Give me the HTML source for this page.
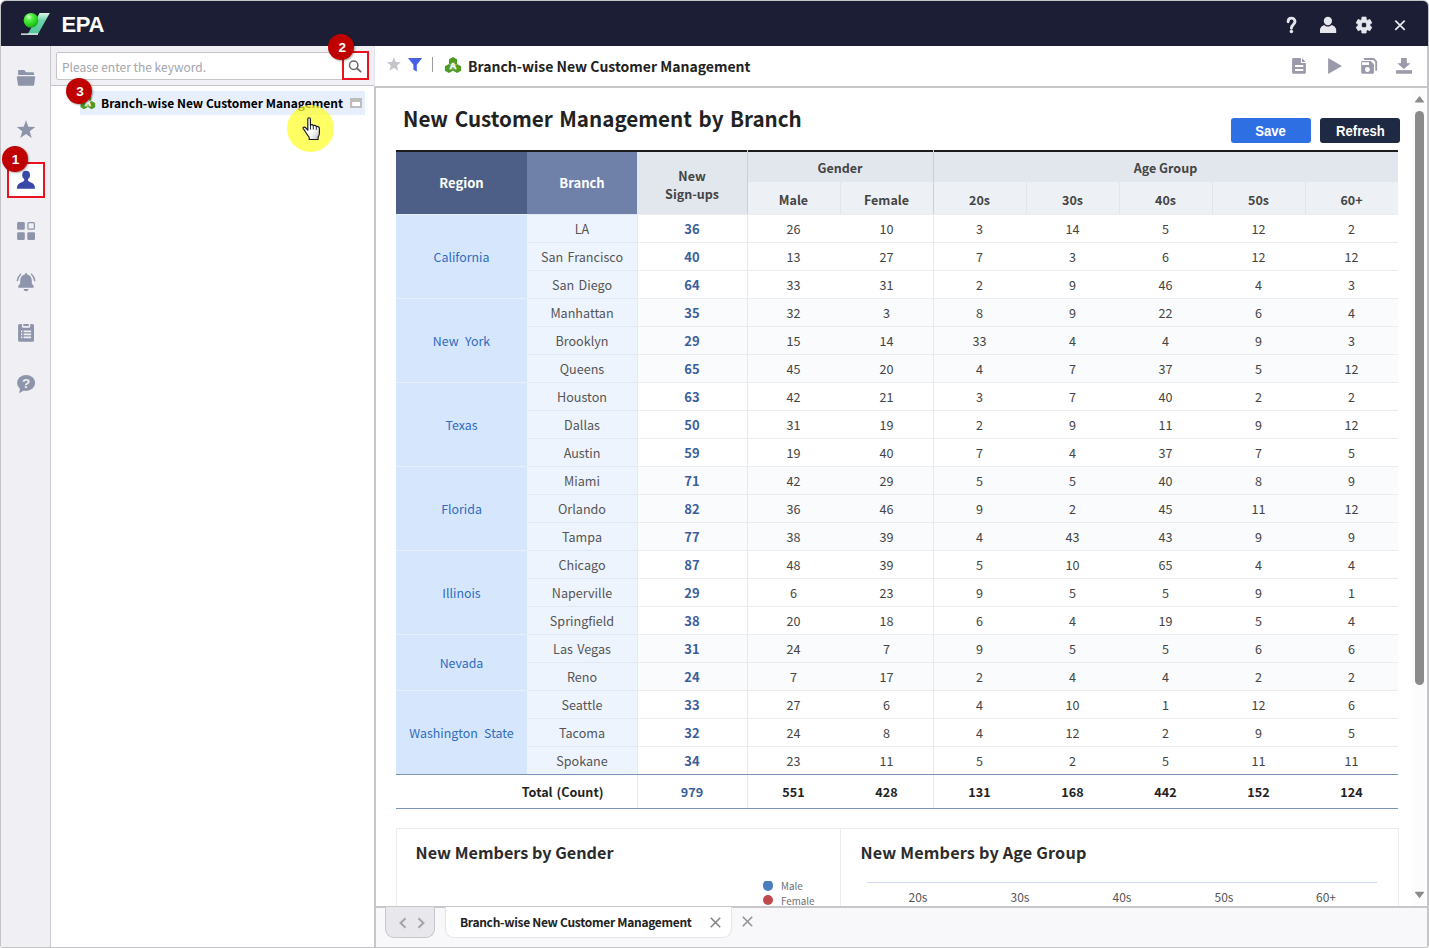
<!DOCTYPE html>
<html lang="en">
<head>
<meta charset="utf-8">
<title>EPA - Branch-wise New Customer Management</title>
<style>
*{box-sizing:border-box;margin:0;padding:0}
html,body{width:1429px;height:948px;overflow:hidden;background:#fff}
body{font-family:"Noto Sans CJK KR","Liberation Sans",sans-serif;color:#333;position:relative}
.abs{position:absolute}
#win{position:absolute;left:0;top:0;width:1429px;height:948px;background:#c4c4c6;border-radius:6px 6px 3px 3px;overflow:hidden}
#inner{position:absolute;left:1px;top:1px;width:1427px;height:946px;background:#fff;border-radius:5px 5px 2px 2px;overflow:hidden}
/* all children of #inner positioned relative to page coords via offset -1 */
#pg{position:absolute;left:-1px;top:-1px;width:1429px;height:948px}
#topbar{left:0;top:0;width:1429px;height:46px;background:#1b1e34}
#epa{left:61.5px;top:11.5px;font:700 22px/26px "Liberation Sans",sans-serif;color:#fff;letter-spacing:-.4px}
#side{left:0;top:46px;width:50px;height:902px;background:#efeff4}
#sidediv{left:50px;top:46px;width:1px;height:902px;background:#c9c9ce}
#lp-top{left:51px;top:46px;width:323px;height:39px;background:#efeff4}
#lp-line{left:51px;top:85px;width:323px;height:1px;background:#c6c6ca}
#lp{left:51px;top:86px;width:323px;height:862px;background:#fff}
#lp-right{left:374.4px;top:86px;width:1.6px;height:862px;background:#c6c6c9}
#lp-right2{left:373.5px;top:46px;width:1px;height:39px;background:#e3e3e9}
#search{left:56px;top:52px;width:313px;height:28px;background:#fff;border:1px solid #c6c6c8;border-radius:2px}
#ph{left:62px;top:58px;font-size:12px;line-height:17px;color:#a2a5ad;white-space:nowrap}
.redbox{border:2px solid #e8192c}
.badge{width:26px;height:26px;border-radius:50%;background:#c00000;color:#fff;font:700 13.6px/27.6px "Liberation Sans",sans-serif;text-align:center;padding-left:2px;box-shadow:1px 1px 2px rgba(0,0,0,.35)}
#treehl{left:80px;top:91px;width:285px;height:24px;background:#e7eefc}
#treetx{left:101px;top:94px;font-weight:700;font-size:12px;line-height:18px;color:#000;white-space:nowrap}
#toolbar{left:374.5px;top:46px;width:1053.5px;height:40px;background:#fff}
#tb-line{left:374.5px;top:86px;width:1053.5px;height:2px;background:#c8c8ca}
#tb-title{left:468px;top:55px;font-weight:700;font-size:14px;line-height:22px;color:#222;white-space:nowrap}
#content{left:376px;top:88px;width:1036px;height:818px;background:#fff;overflow:hidden}
#sb{left:1412px;top:88px;width:15px;height:818px;background:#fcfcfc}
#rb{left:1427.4px;top:46px;width:1.6px;height:902px;background:#c6c6c8}
#bottom{left:376px;top:908px;width:1051px;height:39px;background:#f8f8fb}
#bt-line{left:376px;top:906px;width:1051px;height:2px;background:#c6c6cb}
#winbot{left:0;top:947px;width:1429px;height:1px;background:#bdbdbf}
h1{position:absolute;left:403px;top:103.2px;font-weight:700;font-size:20.6px;line-height:30px;color:#222;white-space:nowrap;letter-spacing:0;word-spacing:1.9px;transform:scaleY(1.04);transform-origin:0 78%}
.btn{position:absolute;top:118px;height:25px;border-radius:3px;color:#fff;font:700 14.2px/26.5px "Liberation Sans",sans-serif;text-align:center}
.btn span{display:inline-block;transform:scaleX(.925)}
#save{left:1231px;width:80px;background:#2f6fe4}
#refresh{left:1320px;width:80px;background:#1e2a44}
#tabtx{font-weight:700;font-size:12px;line-height:18px;letter-spacing:-.3px;color:#222;white-space:nowrap}
.ct{font-weight:700;font-size:16.2px;line-height:24px;color:#2b2b2b;white-space:nowrap}
.lg{font-size:9.8px;line-height:14px;color:#707070;white-space:nowrap}
.ax{font-size:12px;line-height:16px;color:#555;width:40px;text-align:center}
#charts{position:absolute;left:0;top:0;width:1412px;height:906px;overflow:hidden}
#tbl{font-size:13px;color:#444}
.hd1{color:#fff;font-weight:700;font-size:13px;text-align:center;line-height:62px}
.hd2{background:#e2e6ed;color:#444;font-weight:700;font-size:12.5px;text-align:center}
.hd3{background:#edf0f5;color:#444;font-weight:700;font-size:12.5px;text-align:center;line-height:32px}
.rg{background:#d6e7fd;color:#2f6bbf;text-align:center;border-top:1px solid #e8f0fc;font-size:12.4px;word-spacing:3.5px}
.row{left:527px;width:871px;height:28px;display:flex;font-size:12.6px;line-height:27.5px;word-spacing:1.5px;text-align:center;color:#444}
.row span{display:block;height:28px;border-top:1px solid #ececee;width:93px}
.row .br{width:110px;background:#edf4fe;border-top-color:#e0e8f4;color:#555}
.row .su{width:110px;font-weight:700;color:#3b5f9b;font-size:13px}
.tot{font-weight:700;font-size:12.6px;line-height:34.5px;word-spacing:1px}
</style>
</head>
<body>
<div id="win"><div id="inner"><div id="pg">
<div id="topbar" class="abs"></div>
<div id="epa" class="abs">EPA</div>
<div id="side" class="abs"></div>
<div id="sidediv" class="abs"></div>
<div id="lp-top" class="abs"></div>
<div id="lp-line" class="abs"></div>
<div id="lp" class="abs"></div>
<div id="search" class="abs"></div>
<div id="ph" class="abs">Please enter the keyword.</div>
<div id="treehl" class="abs"></div>
<div id="treetx" class="abs">Branch-wise New Customer Management</div>
<div id="toolbar" class="abs"></div>
<div id="tb-line" class="abs"></div>
<div id="tb-title" class="abs">Branch-wise New Customer Management</div>
<div id="content" class="abs"></div>
<div id="tbl">
<div class="abs" style="left:396px;top:150px;width:1002px;height:2px;background:#1d1d1d"></div>
<div class="abs hd1" style="left:396px;top:152px;width:131px;height:62px;background:#4d5f87">Region</div>
<div class="abs hd1" style="left:527px;top:152px;width:110px;height:62px;background:#6f81a9">Branch</div>
<div class="abs hd2" style="left:637px;top:152px;width:110px;height:63px;padding-top:14.5px;line-height:18px">New<br>Sign-ups</div>
<div class="abs hd2" style="left:747px;top:152px;width:186px;height:30px;line-height:32px">Gender</div>
<div class="abs hd2" style="left:933px;top:152px;width:465px;height:30px;line-height:32px">Age Group</div>
<div class="abs hd3" style="left:747px;top:182px;width:93px;height:33px;line-height:35px">Male</div>
<div class="abs hd3" style="left:840px;top:182px;width:93px;height:33px;line-height:35px">Female</div>
<div class="abs hd3" style="left:933px;top:182px;width:93px;height:33px;line-height:35px">20s</div>
<div class="abs hd3" style="left:1026px;top:182px;width:93px;height:33px;line-height:35px">30s</div>
<div class="abs hd3" style="left:1119px;top:182px;width:93px;height:33px;line-height:35px">40s</div>
<div class="abs hd3" style="left:1212px;top:182px;width:93px;height:33px;line-height:35px">50s</div>
<div class="abs hd3" style="left:1305px;top:182px;width:93px;height:33px;line-height:35px">60+</div>
<div class="abs" style="left:747px;top:150px;width:1px;height:65px;background:#c6d0de"></div>
<div class="abs" style="left:933px;top:150px;width:1px;height:65px;background:#c6d0de"></div>
<div class="abs" style="left:840px;top:182px;width:1px;height:33px;background:#e1e6ed"></div>
<div class="abs" style="left:1026px;top:182px;width:1px;height:33px;background:#e1e6ed"></div>
<div class="abs" style="left:1119px;top:182px;width:1px;height:33px;background:#e1e6ed"></div>
<div class="abs" style="left:1212px;top:182px;width:1px;height:33px;background:#e1e6ed"></div>
<div class="abs" style="left:1305px;top:182px;width:1px;height:33px;background:#e1e6ed"></div>
<div class="abs rg" style="left:396px;top:214px;width:131px;height:84px;line-height:85px">California</div>
<div class="abs row" style="top:214px;background:#fff">
<span class="br">LA</span><span class="su">36</span>
<span class="c">26</span>
<span class="c">10</span>
<span class="c">3</span>
<span class="c">14</span>
<span class="c">5</span>
<span class="c">12</span>
<span class="c">2</span>
</div>
<div class="abs row" style="top:242px;background:#fff">
<span class="br">San Francisco</span><span class="su">40</span>
<span class="c">13</span>
<span class="c">27</span>
<span class="c">7</span>
<span class="c">3</span>
<span class="c">6</span>
<span class="c">12</span>
<span class="c">12</span>
</div>
<div class="abs row" style="top:270px;background:#fff">
<span class="br">San Diego</span><span class="su">64</span>
<span class="c">33</span>
<span class="c">31</span>
<span class="c">2</span>
<span class="c">9</span>
<span class="c">46</span>
<span class="c">4</span>
<span class="c">3</span>
</div>
<div class="abs rg" style="left:396px;top:298px;width:131px;height:84px;line-height:85px">New York</div>
<div class="abs row" style="top:298px;background:#fafbfd">
<span class="br">Manhattan</span><span class="su">35</span>
<span class="c">32</span>
<span class="c">3</span>
<span class="c">8</span>
<span class="c">9</span>
<span class="c">22</span>
<span class="c">6</span>
<span class="c">4</span>
</div>
<div class="abs row" style="top:326px;background:#fafbfd">
<span class="br">Brooklyn</span><span class="su">29</span>
<span class="c">15</span>
<span class="c">14</span>
<span class="c">33</span>
<span class="c">4</span>
<span class="c">4</span>
<span class="c">9</span>
<span class="c">3</span>
</div>
<div class="abs row" style="top:354px;background:#fafbfd">
<span class="br">Queens</span><span class="su">65</span>
<span class="c">45</span>
<span class="c">20</span>
<span class="c">4</span>
<span class="c">7</span>
<span class="c">37</span>
<span class="c">5</span>
<span class="c">12</span>
</div>
<div class="abs rg" style="left:396px;top:382px;width:131px;height:84px;line-height:85px">Texas</div>
<div class="abs row" style="top:382px;background:#fff">
<span class="br">Houston</span><span class="su">63</span>
<span class="c">42</span>
<span class="c">21</span>
<span class="c">3</span>
<span class="c">7</span>
<span class="c">40</span>
<span class="c">2</span>
<span class="c">2</span>
</div>
<div class="abs row" style="top:410px;background:#fff">
<span class="br">Dallas</span><span class="su">50</span>
<span class="c">31</span>
<span class="c">19</span>
<span class="c">2</span>
<span class="c">9</span>
<span class="c">11</span>
<span class="c">9</span>
<span class="c">12</span>
</div>
<div class="abs row" style="top:438px;background:#fff">
<span class="br">Austin</span><span class="su">59</span>
<span class="c">19</span>
<span class="c">40</span>
<span class="c">7</span>
<span class="c">4</span>
<span class="c">37</span>
<span class="c">7</span>
<span class="c">5</span>
</div>
<div class="abs rg" style="left:396px;top:466px;width:131px;height:84px;line-height:85px">Florida</div>
<div class="abs row" style="top:466px;background:#fafbfd">
<span class="br">Miami</span><span class="su">71</span>
<span class="c">42</span>
<span class="c">29</span>
<span class="c">5</span>
<span class="c">5</span>
<span class="c">40</span>
<span class="c">8</span>
<span class="c">9</span>
</div>
<div class="abs row" style="top:494px;background:#fafbfd">
<span class="br">Orlando</span><span class="su">82</span>
<span class="c">36</span>
<span class="c">46</span>
<span class="c">9</span>
<span class="c">2</span>
<span class="c">45</span>
<span class="c">11</span>
<span class="c">12</span>
</div>
<div class="abs row" style="top:522px;background:#fafbfd">
<span class="br">Tampa</span><span class="su">77</span>
<span class="c">38</span>
<span class="c">39</span>
<span class="c">4</span>
<span class="c">43</span>
<span class="c">43</span>
<span class="c">9</span>
<span class="c">9</span>
</div>
<div class="abs rg" style="left:396px;top:550px;width:131px;height:84px;line-height:85px">Illinois</div>
<div class="abs row" style="top:550px;background:#fff">
<span class="br">Chicago</span><span class="su">87</span>
<span class="c">48</span>
<span class="c">39</span>
<span class="c">5</span>
<span class="c">10</span>
<span class="c">65</span>
<span class="c">4</span>
<span class="c">4</span>
</div>
<div class="abs row" style="top:578px;background:#fff">
<span class="br">Naperville</span><span class="su">29</span>
<span class="c">6</span>
<span class="c">23</span>
<span class="c">9</span>
<span class="c">5</span>
<span class="c">5</span>
<span class="c">9</span>
<span class="c">1</span>
</div>
<div class="abs row" style="top:606px;background:#fff">
<span class="br">Springfield</span><span class="su">38</span>
<span class="c">20</span>
<span class="c">18</span>
<span class="c">6</span>
<span class="c">4</span>
<span class="c">19</span>
<span class="c">5</span>
<span class="c">4</span>
</div>
<div class="abs rg" style="left:396px;top:634px;width:131px;height:56px;line-height:57px">Nevada</div>
<div class="abs row" style="top:634px;background:#fafbfd">
<span class="br">Las Vegas</span><span class="su">31</span>
<span class="c">24</span>
<span class="c">7</span>
<span class="c">9</span>
<span class="c">5</span>
<span class="c">5</span>
<span class="c">6</span>
<span class="c">6</span>
</div>
<div class="abs row" style="top:662px;background:#fafbfd">
<span class="br">Reno</span><span class="su">24</span>
<span class="c">7</span>
<span class="c">17</span>
<span class="c">2</span>
<span class="c">4</span>
<span class="c">4</span>
<span class="c">2</span>
<span class="c">2</span>
</div>
<div class="abs rg" style="left:396px;top:690px;width:131px;height:84px;line-height:85px">Washington State</div>
<div class="abs row" style="top:690px;background:#fff">
<span class="br">Seattle</span><span class="su">33</span>
<span class="c">27</span>
<span class="c">6</span>
<span class="c">4</span>
<span class="c">10</span>
<span class="c">1</span>
<span class="c">12</span>
<span class="c">6</span>
</div>
<div class="abs row" style="top:718px;background:#fff">
<span class="br">Tacoma</span><span class="su">32</span>
<span class="c">24</span>
<span class="c">8</span>
<span class="c">4</span>
<span class="c">12</span>
<span class="c">2</span>
<span class="c">9</span>
<span class="c">5</span>
</div>
<div class="abs row" style="top:746px;background:#fff">
<span class="br">Spokane</span><span class="su">34</span>
<span class="c">23</span>
<span class="c">11</span>
<span class="c">5</span>
<span class="c">2</span>
<span class="c">5</span>
<span class="c">11</span>
<span class="c">11</span>
</div>
<div class="abs" style="left:637px;top:215px;width:1px;height:593px;background:#e6e9ee"></div>
<div class="abs" style="left:747px;top:215px;width:1px;height:593px;background:#e6e9ee"></div>
<div class="abs" style="left:933px;top:215px;width:1px;height:593px;background:#e6e9ee"></div>
<div class="abs" style="left:396px;top:774px;width:1002px;height:1px;background:#7b93b9"></div>
<div class="abs" style="left:396px;top:808px;width:1002px;height:1px;background:#7b93b9"></div>
<div class="abs tot" style="left:396px;top:775px;width:241px;height:33px;text-align:right;padding-right:33.5px;color:#222">Total (Count)</div>
<div class="abs tot" style="left:637px;top:775px;width:110px;height:33px;text-align:center;color:#3b5f9b">979</div>
<div class="abs tot" style="left:747px;top:775px;width:93px;height:33px;text-align:center;color:#222">551</div>
<div class="abs tot" style="left:840px;top:775px;width:93px;height:33px;text-align:center;color:#222">428</div>
<div class="abs tot" style="left:933px;top:775px;width:93px;height:33px;text-align:center;color:#222">131</div>
<div class="abs tot" style="left:1026px;top:775px;width:93px;height:33px;text-align:center;color:#222">168</div>
<div class="abs tot" style="left:1119px;top:775px;width:93px;height:33px;text-align:center;color:#222">442</div>
<div class="abs tot" style="left:1212px;top:775px;width:93px;height:33px;text-align:center;color:#222">152</div>
<div class="abs tot" style="left:1305px;top:775px;width:93px;height:33px;text-align:center;color:#222">124</div>
</div>
<h1>New Customer Management by Branch</h1>
<div id="save" class="btn"><span>Save</span></div>
<div id="refresh" class="btn"><span>Refresh</span></div>
<div id="charts">
<div class="abs" style="left:396px;top:828px;width:1002px;height:1px;background:#ececec"></div>
<div class="abs" style="left:396px;top:828px;width:1px;height:78px;background:#ececec"></div>
<div class="abs" style="left:840px;top:828px;width:1px;height:78px;background:#ececec"></div>
<div class="abs" style="left:1398px;top:828px;width:1px;height:78px;background:#ececec"></div>
<div class="abs ct" style="left:415.6px;top:840px">New Members by Gender</div>
<div class="abs ct" style="left:860.4px;top:840px;letter-spacing:.18px">New Members by Age Group</div>
<div class="abs" style="left:762px;top:881px;width:12px;height:11px;overflow:hidden"><div style="margin:-0.6px 0 0 0.8px;width:10.4px;height:10.4px;border-radius:50%;background:#4a7ebf"></div></div>
<div class="abs" style="left:762.8px;top:894.8px;width:10.4px;height:10.4px;border-radius:50%;background:#c0494b"></div>
<div class="abs lg" style="left:781px;top:879px">Male</div>
<div class="abs lg" style="left:781px;top:894px">Female</div>
<div class="abs" style="left:867px;top:882px;width:510px;height:1px;background:#cdd8ea"></div>
<div class="abs ax" style="left:898px;top:889px">20s</div>
<div class="abs ax" style="left:1000px;top:889px">30s</div>
<div class="abs ax" style="left:1102px;top:889px">40s</div>
<div class="abs ax" style="left:1204px;top:889px">50s</div>
<div class="abs ax" style="left:1306px;top:889px">60+</div>
</div>

<div id="sb" class="abs"></div>
<div id="bt-line" class="abs"></div>
<div id="bottom" class="abs"></div>
<div class="abs" style="left:385px;top:907px;width:50px;height:31px;background:#e7e7ec;border:1px solid #c6c6cd;border-top:none;border-radius:0 0 9px 9px"></div>
<svg class="abs" style="left:398px;top:916px" width="28" height="14" viewBox="0 0 28 14"><path d="M7.5 2.3 L2.6 7 L7.5 11.7 M20.5 2.3 L25.4 7 L20.5 11.7" fill="none" stroke="#a4a4a8" stroke-width="2"/></svg>
<div class="abs" style="left:445px;top:907px;width:287px;height:31px;background:#fff;border:1px solid #e4e4ea;border-top:none;border-radius:0 0 9px 9px"></div>
<div class="abs" id="tabtx" style="left:460px;top:913px">Branch-wise New Customer Management</div>
<svg class="abs" style="left:709px;top:916px" width="13" height="13" viewBox="0 0 13 13"><path d="M1.8 1.8 L11.2 11.2 M11.2 1.8 L1.8 11.2" fill="none" stroke="#858585" stroke-width="1.6"/></svg>
<svg class="abs" style="left:741px;top:915px" width="13" height="13" viewBox="0 0 13 13"><path d="M1.8 1.8 L11.2 11.2 M11.2 1.8 L1.8 11.2" fill="none" stroke="#939393" stroke-width="1.6"/></svg>

<div id="lp-right" class="abs"></div><div id="lp-right2" class="abs"></div>
<div id="rb" class="abs"></div>
<div id="winbot" class="abs"></div>
<svg class="abs" style="left:0;top:0" width="1429" height="948" viewBox="0 0 1429 948">
<defs>
<radialGradient id="ball" cx="0.36" cy="0.28" r="0.8"><stop offset="0" stop-color="#d6ffd0"/><stop offset="0.28" stop-color="#5aee48"/><stop offset="0.65" stop-color="#27d41f"/><stop offset="1" stop-color="#179c1c"/></radialGradient>
<linearGradient id="para" x1="0" y1="0" x2="0" y2="1"><stop offset="0" stop-color="#dff5ea"/><stop offset="0.35" stop-color="#6dd3aa"/><stop offset="1" stop-color="#4fc79a"/></linearGradient>
</defs>
<!-- logo -->
<path d="M39.6 13 L49.8 13 L38 34 L27.8 34 Z" fill="url(#para)"/>
<rect x="21" y="33.5" width="17" height="1.3" fill="#fff"/>
<circle cx="31" cy="20.3" r="7.4" fill="url(#ball)"/>
<!-- top bar icons -->
<g fill="#e6e6ee">
<path d="M1288.1 21.8 C1288.1 16.9 1295 16.9 1295 21.6 C1295 24.4 1291.4 24.6 1291.4 28.2" fill="none" stroke="#e6e6ee" stroke-width="2.9" stroke-linecap="round"/>
<circle cx="1291.4" cy="31.5" r="1.75"/>
<circle cx="1327.9" cy="21" r="4.15"/>
<path d="M1320 33 V29.6 C1320 27.6 1322 25.8 1324.3 25 C1326.4 27.1 1329.4 27.1 1331.5 25 C1334 25.8 1336.2 27.6 1336.2 29.6 V33 Z"/>
<path id="gear" fill-rule="evenodd" d="M1361.85 19.45 L1361.89 17.1 L1366.11 17.1 L1366.15 19.45 L1367.78 20.39 L1369.76 19.29 L1371.87 22.94 L1369.93 24.11 L1369.93 25.99 L1371.87 27.16 L1369.76 30.81 L1367.78 29.71 L1366.15 30.65 L1366.11 33 L1361.89 33 L1361.85 30.65 L1360.22 29.71 L1358.24 30.81 L1356.13 27.16 L1358.07 25.99 L1358.07 24.11 L1356.13 22.94 L1358.24 19.29 L1360.22 20.39 Z M1364 22.3 a2.75 2.75 0 1 0 0.001 0 Z" stroke="#e6e6ee" stroke-width="0.8" stroke-linejoin="round"/>
<path d="M1395.3 20.6 L1404.7 29.8 M1404.7 20.6 L1395.3 29.8" stroke="#e6e6ee" stroke-width="1.8" fill="none"/>
</g>
<!-- sidebar icons -->
<g fill="#8e94aa">
<path d="M18.1 70.8 Q18.1 70.1 18.8 70.1 H24.3 L26 72.2 H33.3 Q34 72.2 34 72.9 V74.9 H18.1 Z"/>
<path d="M17.4 76.2 H34.6 Q35.3 76.2 35.2 76.9 L34.1 85 Q34 85.7 33.3 85.7 H18.8 Q18.1 85.7 18 85 L16.8 76.9 Q16.7 76.2 17.4 76.2 Z"/>
<path d="M26 120.3 L28.3 126.8 L35.3 127 L29.7 131.2 L31.7 138 L26 134 L20.3 138 L22.3 131.2 L16.7 127 L23.7 126.8 Z"/>
<rect x="17.1" y="222.1" width="7.7" height="7.7" rx="1.3"/>
<rect x="17.1" y="232.3" width="7.7" height="7.7" rx="1.3"/>
<rect x="27.3" y="232.3" width="7.7" height="7.7" rx="1.3"/>
<rect x="27.9" y="222.7" width="6.5" height="6.5" rx="1" fill="none" stroke="#8e94aa" stroke-width="1.2"/>
<path d="M25 273.2 h2.1 v1.2 C30 275 31.8 277.4 31.8 280.5 V283.5 L34 286.6 Q34 287.7 33 287.7 H19 Q18 287.7 18 286.6 L20.2 283.5 V280.5 C20.2 277.4 22 275 25 274.4 Z"/>
<path d="M23.4 289 H28.7 Q28 291.2 26.05 291.2 Q24.1 291.2 23.4 289 Z"/>
<path d="M20.6 274.3 Q17.9 276.8 17.4 280.6 M31.5 274.3 Q34.2 276.8 34.7 280.6" fill="none" stroke="#8e94aa" stroke-width="1.4" stroke-linecap="round"/>
<path fill-rule="evenodd" d="M19.6 324.1 H21.9 V326.3 Q21.9 327.8 23.4 327.8 H28.8 Q30.3 327.8 30.3 326.3 V324.1 H32.5 Q34 324.1 34 325.6 V340.3 Q34 341.8 32.5 341.8 H19.6 Q18.1 341.8 18.1 340.3 V325.6 Q18.1 324.1 19.6 324.1 Z M21 330.4 h1.3 v1.8 h-1.3 Z M23.6 330.4 h7.5 v1.8 h-7.5 Z M21 333.5 h1.3 v1.8 h-1.3 Z M23.6 333.5 h7.5 v1.8 h-7.5 Z M21 336.5 h1.3 v1.8 h-1.3 Z M23.6 336.5 h7.5 v1.8 h-7.5 Z"/>
<rect x="23.2" y="324.1" width="5.7" height="1.8" rx="0.4"/>
<ellipse cx="26.1" cy="382.9" rx="9" ry="8"/>
<path d="M20.5 387 L19 393.2 L25.5 389.5 Z"/>
</g>
<text x="26.2" y="388.3" text-anchor="middle" font-family="Liberation Sans, sans-serif" font-weight="700" font-size="13.5" fill="#efeff4">?</text>
<!-- selected user -->
<rect x="8" y="163" width="36" height="34" fill="#fff" stroke="#e8131f" stroke-width="2"/>
<g fill="#3748a8">
<ellipse cx="26.1" cy="175" rx="3.9" ry="4.3"/>
<path d="M24.2 177.5 h3.8 V180 C28 181 29 181.6 30.5 182.2 C33.5 183.3 35 184.6 35 188.8 H17 C17 184.6 18.6 183.3 21.6 182.2 C23.2 181.6 24.2 181 24.2 180 Z"/>
</g>
<!-- search magnifier box -->
<rect x="343" y="52" width="25" height="27" fill="#fff" stroke="#e8131f" stroke-width="2"/>
<circle cx="353.7" cy="65.2" r="4.2" fill="none" stroke="#6a6a6a" stroke-width="1.5"/>
<path d="M356.8 68.3 L360.6 71.6" stroke="#6a6a6a" stroke-width="1.8" stroke-linecap="round"/>
<!-- tree item icons -->
<g transform="translate(80.2,94.2) scale(0.96)">
<path d="M8 0 L11.6 2.1 V6.3 L8 8.4 L4.4 6.3 V2.1 Z M4 7.2 L7.6 9.3 V13.5 L4 15.6 L0.4 13.5 V9.3 Z M12 7.2 L15.6 9.3 V13.5 L12 15.6 L8.4 13.5 V9.3 Z" fill="#4e9a23"/>
<text x="8" y="12.2" text-anchor="middle" font-family="Liberation Sans, sans-serif" font-weight="700" font-size="9" fill="#fff" stroke="#fff" stroke-width="0.4">A</text>
</g>
<rect x="350" y="98" width="12" height="10" fill="#bdbdbd"/>
<rect x="352.2" y="102" width="7.8" height="4" fill="#fff"/>
<!-- toolbar left icons -->
<path d="M393.9 57 L395.8 62.1 L401 62.3 L396.9 65.6 L398.3 70.8 L393.9 67.8 L389.5 70.8 L390.9 65.6 L386.8 62.3 L392 62.1 Z" fill="#c4c4ca"/>
<path d="M408 58.1 H422.2 L416.8 64.8 V71.5 L413.4 69.8 V64.8 Z" fill="#4661e2"/>
<rect x="432" y="57" width="1" height="15" fill="#9c9c9c"/>
<g transform="translate(444.9,56.9)">
<path d="M8.1 0 L12.1 2.3 V6.9 L8.1 9.2 L4.1 6.9 V2.3 Z M4 7 L8 9.3 V13.9 L4 16.2 L0 13.9 V9.3 Z M12.2 7 L16.2 9.3 V13.9 L12.2 16.2 L8.2 13.9 V9.3 Z" fill="#4e9a23"/>
<text x="8.1" y="12.3" text-anchor="middle" font-family="Liberation Sans, sans-serif" font-weight="700" font-size="9.6" fill="#fff" stroke="#fff" stroke-width="0.5">A</text>
</g>
<!-- toolbar right icons -->
<g fill="#9a9aaa">
<path fill-rule="evenodd" d="M1293.4 58.1 H1300.9 V63 H1305.9 V72.4 Q1305.9 73.7 1304.6 73.7 H1293.4 Q1292.1 73.7 1292.1 72.4 V59.4 Q1292.1 58.1 1293.4 58.1 Z M1295 65 h8.3 v2 h-8.3 Z M1295 69 h8.3 v2 h-8.3 Z"/>
<path d="M1302 58.3 L1305.7 62 H1302 Z"/>
<path d="M1328.1 58.1 L1342 66 L1328.1 74 Z"/>
<path fill-rule="evenodd" d="M1362.4 61 H1370.6 L1373.9 64.3 V72.5 Q1373.9 73.7 1372.7 73.7 H1362.4 Q1361.2 73.7 1361.2 72.5 V62.2 Q1361.2 61 1362.4 61 Z M1362.1 62.3 h6.9 v2.7 h-6.9 Z M1367.4 67.1 a2.5 2.5 0 1 0 0.001 0 Z"/>
<path d="M1364.1 59 H1373.7 L1376.2 61.5 V70.7" fill="none" stroke="#9a9aaa" stroke-width="1.8"/>
<path d="M1401 58.1 H1406.8 V63.2 H1410.6 L1403.9 68.9 L1397.2 63.2 H1401 Z"/>
<rect x="1396.1" y="70.2" width="15.9" height="3.5"/>
</g>
<!-- scrollbar -->
<g fill="#8b8b8b">
<path d="M1419.5 96 L1424 101.8 Q1424.2 102.6 1423.4 102.6 H1415.6 Q1414.8 102.6 1415 101.8 Z"/>
<rect x="1415" y="111" width="9" height="574" rx="4.5"/>
<path d="M1419.5 898.3 L1424 892.5 Q1424.2 891.7 1423.4 891.7 H1415.6 Q1414.8 891.7 1415 892.5 Z"/>
</g>
</svg>

<div class="abs" style="left:287px;top:105px;width:47px;height:47px;border-radius:50%;background:rgba(255,255,40,.72)"></div>
<svg class="abs" style="left:300px;top:116px" width="24" height="26" viewBox="0 0 24 26">
<defs><linearGradient id="hg" x1="0.3" y1="0.3" x2="1" y2="1"><stop offset="0.45" stop-color="#fff"/><stop offset="1" stop-color="#b9b9b9"/></linearGradient></defs>
<path d="M7.8 2.8 Q7.8 1.7 9.1 1.7 Q10.4 1.7 10.4 2.8 V9.4 Q10.9 8.4 12.1 8.6 Q13.2 8.8 13.3 10 Q13.9 9.1 15.1 9.4 Q16.2 9.7 16.3 10.9 Q17 10.2 18 10.6 Q19.4 11 19.4 12.4 V17 Q19.4 19.5 18.1 21.2 V23.5 H9.2 V21.4 Q7.2 19 5.4 15.8 Q4.4 14 3.2 12.6 Q2.7 11.6 3.7 11.2 Q4.9 10.9 5.9 12 L7.8 14.2 Z" fill="url(#hg)" stroke="#111827" stroke-width="1.15" stroke-linejoin="round"/>
<path d="M10.5 9.6 V13.6 M13.3 10.2 V13.6 M16.3 11.2 V13.9" stroke="#111827" stroke-width="0.9" fill="none"/>
</svg>
<div class="abs badge" style="left:1.6px;top:145.6px">1</div>
<div class="abs badge" style="left:328.2px;top:34px">2</div>
<div class="abs badge" style="left:66px;top:78px">3</div>

</div></div></div>
</body>
</html>
